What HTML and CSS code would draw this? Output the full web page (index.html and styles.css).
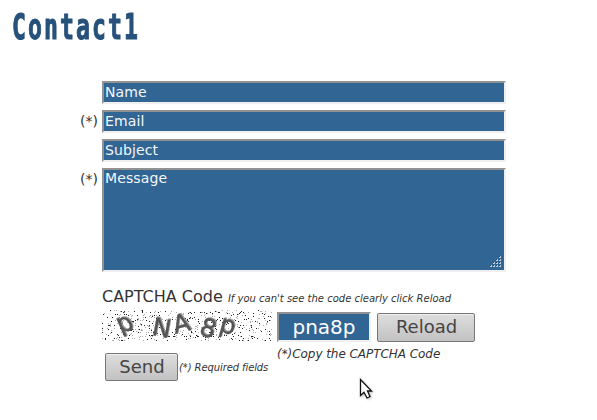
FILE: index.html
```
<!DOCTYPE html>
<html lang="en">
<head>
<meta charset="utf-8">
<title>Contact1</title>
<link rel="stylesheet" href="styles.css">
</head>
<body>
<h1><span>Contact1</span></h1>
<main>
  <div class="row"><span class="req"></span><div class="field">Name</div></div>
  <div class="row"><span class="req">(*)</span><div class="field">Email</div></div>
  <div class="row"><span class="req"></span><div class="field">Subject</div></div>
  <div class="row"><span class="req">(*)</span><div class="field message">Message
    <svg class="grip" width="12" height="12" viewBox="0 0 12 12" shape-rendering="crispEdges"><path id="grip" fill="#b9cad9" d=""/><path id="gripdark" fill="#1e4263" d=""/></svg>
  </div></div>
  <div class="caption">CAPTCHA Code <em>If you can't see the code clearly click Reload</em></div>
  <div class="captcha">
    <svg class="noise" width="170" height="32" viewBox="0 0 170 32">
      <path id="greydots" fill="#aaa" shape-rendering="crispEdges" d=""/>
      <path id="dots" fill="#222" shape-rendering="crispEdges" d=""/>
      <g class="glyphs">
        <text transform="translate(18 22) rotate(-8) skewX(16)">p</text>
        <text transform="translate(49 25) rotate(10)">N</text>
        <text transform="translate(73 24) rotate(-14)">A</text>
        <text transform="translate(96 24) rotate(18)">8</text>
        <text transform="translate(116 21) rotate(16)">p</text>
      </g>
    </svg>
    <div class="code">pna8p</div>
    <div class="button reload">Reload</div>
  </div>
  <div class="hint">(*)Copy the CAPTCHA Code</div>
  <div class="submit"><div class="button send">Send</div><em>(*) Required fields</em></div>
</main>
<svg class="cursor" width="18" height="24" viewBox="0 0 18 24"><path d="M1.5 1.5V17.5L5 14.2L8 20L11 18.5L8.5 13H12.5Z"/></svg>
<script src="noise.js"></script>
</body>
</html>
```
FILE: styles.css
```
* { box-sizing: border-box; }
body {
  margin: 0;
  width: 597px;
  height: 420px;
  overflow: hidden;
  position: relative;
  background: #fff;
  color: #333;
  font: 14px "DejaVu Sans", sans-serif;
}
h1 {
  margin: 0;
  height: 81px;
  padding: 5px 0 0 12px;
  color: #26517a;
  font: bold 36px/44px "DejaVu Sans Mono", monospace;
}
h1 span {
  display: inline-block;
  letter-spacing: 3.2px;
  transform: scaleX(.643);
  transform-origin: 0 0;
  -webkit-text-stroke: 1.1px #26517a;
}
main { padding-left: 77px; }
.row { display: flex; margin-bottom: 6px; }
.req { width: 25px; padding: 3px 0 0 3px; line-height: 17px; white-space: nowrap; }
.field {
  width: 404px;
  height: 23px;
  padding: 0 1px;
  border: 2px solid;
  border-color: #929292 #f1f0f0 #f1f0f0 #929292;
  background: #316594;
  color: #f4f7fa;
  line-height: 19px;
  letter-spacing: .12px;
}
.message { height: 104px; position: relative; line-height: 17px; }
.grip { position: absolute; right: 2px; bottom: 2px; }
.caption { margin: 15px 0 0 25px; height: 23px; font-size: 16px; line-height: 20px; white-space: nowrap; }
em { font-size: 10px; letter-spacing: 0; }
.captcha { display: flex; height: 32px; margin-left: 25px; }
.noise { flex: none; }
.glyphs {
  font: 25px "DejaVu Sans", sans-serif;
  fill: #555;
  stroke: #555;
  stroke-width: .3px;
  filter: drop-shadow(1.5px -1px 0 #999);
}
.code {
  width: 94px;
  height: 30px;
  margin: 2px 6px 0 5px;
  border: 2px solid;
  border-color: #929292 #f1f0f0 #f1f0f0 #929292;
  background: #316594;
  color: #fff;
  font-size: 20px;
  line-height: 26px;
  text-align: center;
}
.button {
  border: 1px solid #777;
  border-radius: 2px;
  background: linear-gradient(#dedede, #c2c2c2);
  box-shadow: inset 0 1px #eee;
  color: #444;
  font-size: 18px;
  line-height: 26px;
  text-align: center;
}
.reload { width: 98px; height: 29px; margin-top: 3px; padding-left: 1px; }
.hint { margin: 4px 0 0 200px; height: 16px; font-size: 12px; line-height: 16px; font-style: italic; letter-spacing: -.05px; }
.submit { display: flex; align-items: center; margin: -9px 0 0 28px; gap: 1px; }
.submit em { letter-spacing: -.1px; }
.send { width: 73px; height: 28px; padding-left: 1px; }
.cursor { position: absolute; left: 359px; top: 378px; fill: #fff; stroke: #111; stroke-width: 1.3; filter: drop-shadow(1px 1px 1px #bbb); }
```
FILE: noise.js
```
// Speckled captcha background from a fixed seed
let seed = 4711;
function rnd() {
  seed = (seed * 48271) % 2147483647;
  return seed / 2147483647;
}
function speckle(count) {
  let d = "";
  for (let i = 0; i < count; i++) {
    d += `M${Math.floor(rnd() * 170)} ${Math.floor(rnd() * 31)}h1v1h-1z`;
  }
  return d;
}
document.getElementById("dots").setAttribute("d", speckle(240));
document.getElementById("greydots").setAttribute("d", speckle(300));

// Resize grip: a triangle of small dots
let light = "", dark = "";
for (let r = 0; r < 4; r++) {
  for (let c = 3 - r; c < 4; c++) {
    light += `M${c * 3 + 1} ${r * 3}h1v2h-2v-1h1z`;
    dark += `M${c * 3} ${r * 3}h1v1h-1z`;
  }
}
document.getElementById("grip").setAttribute("d", light);
document.getElementById("gripdark").setAttribute("d", dark);
```
